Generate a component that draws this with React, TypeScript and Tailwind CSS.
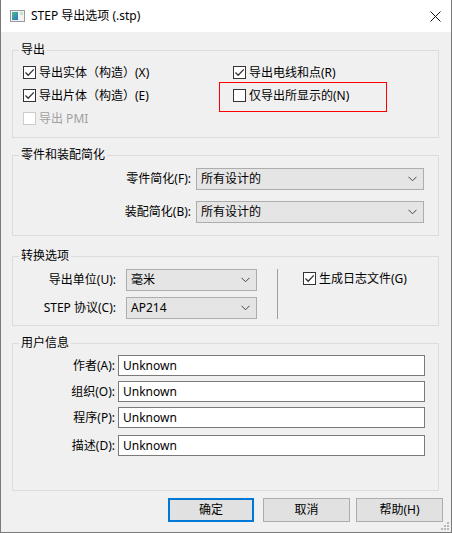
import type { ReactNode } from "react";

function Check({ checked, disabled }: { checked?: boolean; disabled?: boolean }) {
  return (
    <span
      className={`flex h-[13px] w-[13px] shrink-0 items-center justify-center border bg-white ${
        disabled ? "border-[#cccccc]" : "border-[#333333]"
      }`}
    >
      {checked && (
        <svg width="11" height="11" viewBox="0 0 11 11">
          <path d="M1.5 5.5 L4.2 8.2 L9.8 2.4" fill="none" stroke="#333" strokeWidth="1.3" />
        </svg>
      )}
    </span>
  );
}

function CheckRow({
  label,
  checked,
  disabled,
}: {
  label: string;
  checked?: boolean;
  disabled?: boolean;
}) {
  return (
    <div className="flex h-[23px] items-center gap-[3px]">
      <Check checked={checked} disabled={disabled} />
      <span className={disabled ? "text-[#a0a0a0]" : "text-black"}>{label}</span>
    </div>
  );
}

function Combo({ value, width }: { value: string; width: string }) {
  return (
    <div
      className={`flex h-[22px] items-center justify-between border border-[#adadad] bg-[#e5e5e5] pl-[4px] pr-[6px] ${width}`}
    >
      <span>{value}</span>
      <svg width="9" height="6" viewBox="0 0 9 6">
        <path d="M0.5 0.8 L4.5 4.8 L8.5 0.8" fill="none" stroke="#444" strokeWidth="1" />
      </svg>
    </div>
  );
}

function Group({ title, className, children }: { title: string; className: string; children: ReactNode }) {
  return (
    <fieldset className={`w-[427px] border border-[#dcdcdc] ${className}`}>
      <legend className="ml-[6px] px-[2px] leading-[16px]">{title}</legend>
      {children}
    </fieldset>
  );
}

function TextField({ label, className }: { label: string; className: string }) {
  return (
    <div className={`flex items-center gap-[3px] ${className}`}>
      <span className="w-[102px] text-right">{label}</span>
      <div className="flex h-[21px] w-[307px] items-center border border-[#7a7a7a] bg-white pl-[4px]">
        Unknown
      </div>
    </div>
  );
}

export default function App() {
  return (
    <div className="relative flex h-[533px] w-[452px] flex-col border-x border-b border-[#7a7a7a] font-['Noto_Sans','Noto_Sans_CJK_SC',sans-serif] text-[12px] leading-[16px] text-black">
      <div className="flex h-[32px] shrink-0 items-center bg-white">
        <svg className="ml-[9px]" width="15" height="12" viewBox="0 0 15 12">
          <defs>
            <linearGradient id="ic" x1="0" y1="0" x2="1" y2="1">
              <stop offset="0" stopColor="#4cc08a" />
              <stop offset="1" stopColor="#2f6fc4" />
            </linearGradient>
          </defs>
          <rect x="0.5" y="0.5" width="14" height="11" fill="#f2f2f2" stroke="#9a9a9a" />
          <rect x="2" y="2" width="6" height="8" fill="url(#ic)" />
          <rect x="10" y="2" width="3" height="3" fill="#bfe3d4" />
        </svg>
        <span className="ml-[6px] leading-[16px]">STEP 导出选项 (.stp)</span>
        <svg className="ml-auto mr-[10px]" width="11" height="11" viewBox="0 0 11 11">
          <path d="M0.5 0.5 L10.5 10.5 M10.5 0.5 L0.5 10.5" stroke="#111" strokeWidth="1" />
        </svg>
      </div>

      <div className="flex flex-1 flex-col bg-[#f0f0f0] pl-[11px]">
        <Group title="导出" className="mt-[10px] h-[96px]">
          <div className="grid grid-cols-[210px_1fr] pl-[10px] pt-[3px]">
            <CheckRow label="导出实体（构造）(X)" checked />
            <CheckRow label="导出电线和点(R)" checked />
            <CheckRow label="导出片体（构造）(E)" checked />
            <CheckRow label="仅导出所显示的(N)" />
            <CheckRow label="导出 PMI" disabled />
          </div>
        </Group>

        <Group title="零件和装配简化" className="mt-[9px] h-[89px]">
          <div className="flex flex-col items-end pr-[14px]">
            <div className="mt-[5px] flex items-center gap-[5px]">
              <span>零件简化(F):</span>
              <Combo value="所有设计的" width="w-[228px]" />
            </div>
            <div className="mt-[11px] flex items-center gap-[5px]">
              <span>装配简化(B):</span>
              <Combo value="所有设计的" width="w-[228px]" />
            </div>
          </div>
        </Group>

        <Group title="转换选项" className="mt-[12px] h-[78px]">
          <div className="flex items-start">
            <div className="flex flex-col">
              <div className="mt-[5px] flex items-center">
                <span className="w-[103px] text-right">导出单位(U):</span>
                <div className="ml-[10px]">
                  <Combo value="毫米" width="w-[131px]" />
                </div>
              </div>
              <div className="mt-[6px] flex items-center">
                <span className="w-[103px] text-right">STEP 协议(C):</span>
                <div className="ml-[10px]">
                  <Combo value="AP214" width="w-[131px]" />
                </div>
              </div>
            </div>
            <div className="ml-[20px] mt-[5px] h-[50px] w-px bg-[#a0a0a0]" />
            <div className="ml-[25px] mt-[3px]">
              <CheckRow label="生成日志文件(G)" checked />
            </div>
          </div>
        </Group>

        <Group title="用户信息" className="mt-[9px] h-[156px]">
          <TextField label="作者(A):" className="mt-[4px]" />
          <TextField label="组织(O):" className="mt-[5px]" />
          <TextField label="程序(P):" className="mt-[5px]" />
          <TextField label="描述(D):" className="mt-[7px]" />
        </Group>

        <div className="mt-[7px] flex justify-end pr-[8px]">
          <button className="h-[24px] w-[86px] border-2 border-[#0078d7] bg-[#e1e1e1]">确定</button>
          <button className="ml-[9px] h-[24px] w-[87px] border border-[#adadad] bg-[#e1e1e1]">取消</button>
          <button className="ml-[6px] h-[24px] w-[87px] border border-[#adadad] bg-[#e1e1e1]">帮助(H)</button>
        </div>
      </div>

      <div className="absolute left-[218px] top-[82px] h-[30px] w-[168px] border border-[#ff0000]" />

      <svg className="absolute bottom-[1px] right-[1px]" width="9" height="9" viewBox="0 0 9 9">
        <g fill="#b8b8b8">
          <rect x="6" y="0" width="2" height="2" />
          <rect x="3" y="3" width="2" height="2" />
          <rect x="6" y="3" width="2" height="2" />
          <rect x="0" y="6" width="2" height="2" />
          <rect x="3" y="6" width="2" height="2" />
          <rect x="6" y="6" width="2" height="2" />
        </g>
      </svg>
    </div>
  );
}
